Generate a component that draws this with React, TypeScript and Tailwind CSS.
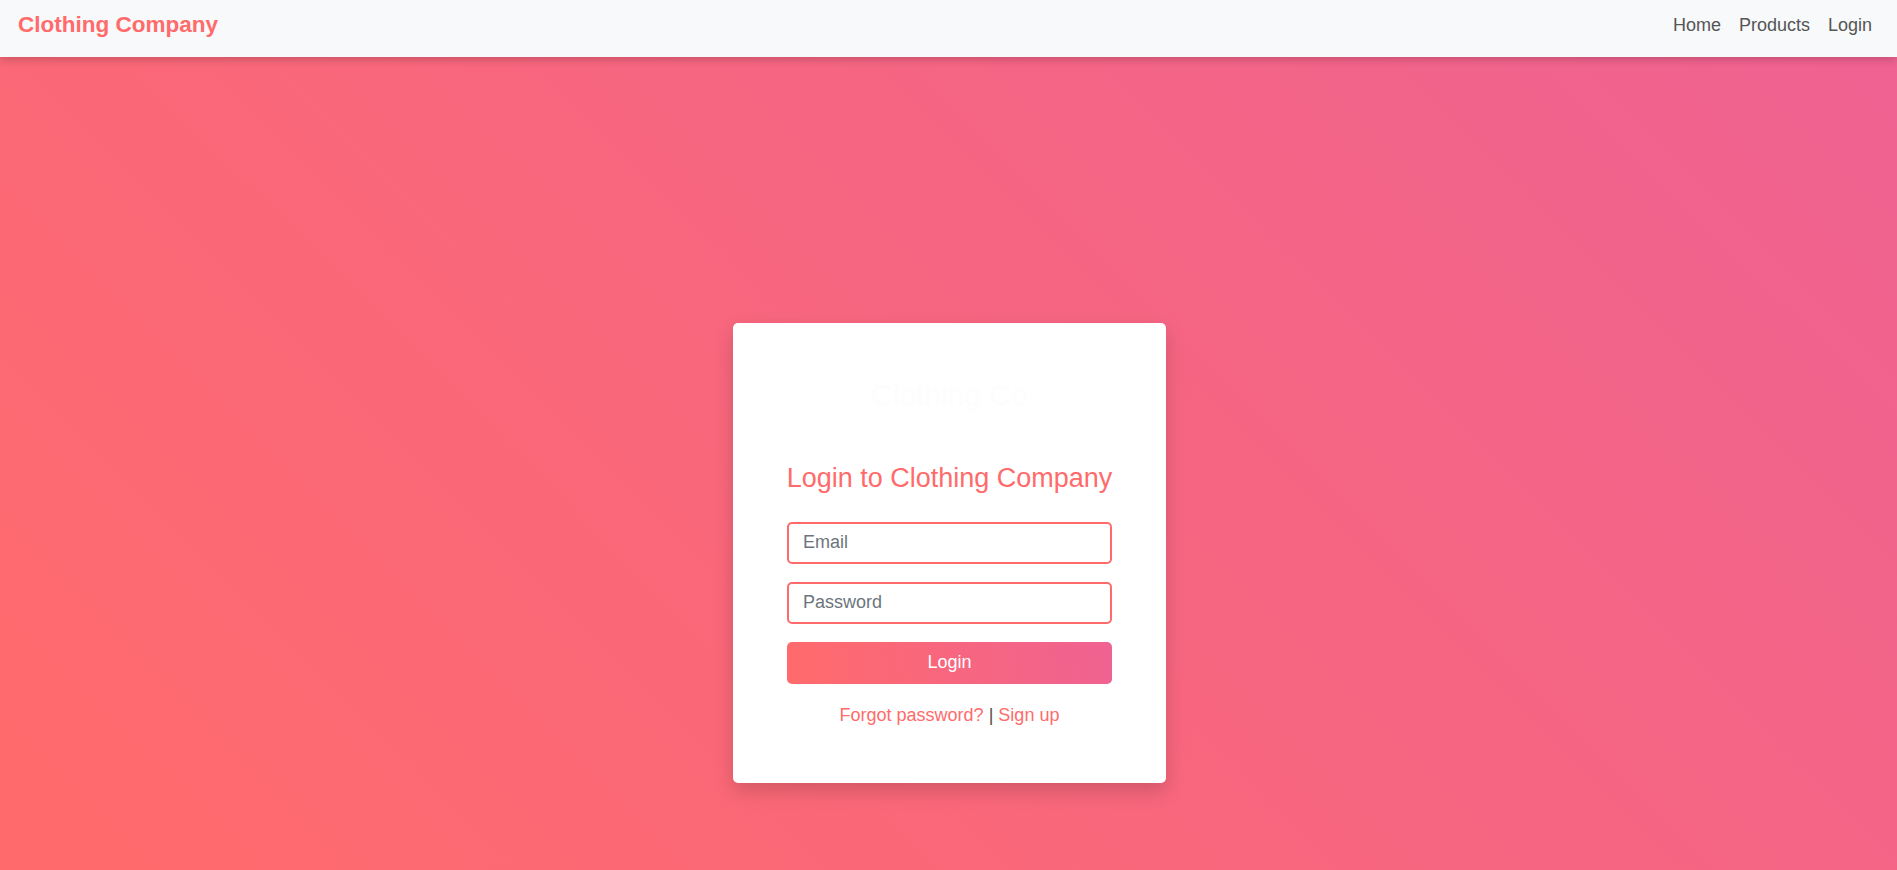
import React from "react";

const NavBar = () => {
  const links = ["Home", "Products", "Login"];
  return (
    <nav className="relative z-10 flex h-[57px] items-center justify-between bg-[#f8f9fa] pl-[18px] pr-[16px] pb-[7px] shadow-[0_3px_8px_rgba(0,0,0,0.18)]">
      <a href="#" className="text-[22.5px] font-bold leading-[1.5] text-[#ff6b6b]">
        Clothing Company
      </a>
      <ul className="flex items-center">
        {links.map((link) => (
          <li key={link}>
            <a href="#" className="block px-[9px] text-[18px] leading-[1.5] text-[#555]">
              {link}
            </a>
          </li>
        ))}
      </ul>
    </nav>
  );
};

const LoginCard = () => {
  return (
    <div className="w-[433px] rounded-[5px] bg-white p-[54px] shadow-[0_8px_20px_rgba(0,0,0,0.16)]">
      {/* Logo (white on white in the original) */}
      <div className="flex h-[84.5px] items-start justify-center">
        <span className="text-[30px] leading-[1.2] text-[#fdfdfd]">Clothing Co</span>
      </div>

      <h2 className="-mx-[10px] mb-[28px] whitespace-nowrap text-center text-[27px] font-normal leading-[1.2] text-[#ff6b6b]">
        Login to Clothing Company
      </h2>

      <form onSubmit={(e) => e.preventDefault()}>
        <input
          type="email"
          placeholder="Email"
          className="mb-[18px] block h-[42px] w-full rounded-[5px] border-2 border-[#ff6b6b] bg-white px-[14px] text-[18px] text-[#495057] outline-none placeholder:text-[#6c757d]"
        />
        <input
          type="password"
          placeholder="Password"
          className="mb-[18px] block h-[42px] w-full rounded-[5px] border-2 border-[#ff6b6b] bg-white px-[14px] text-[18px] text-[#495057] outline-none placeholder:text-[#6c757d]"
        />
        <button
          type="submit"
          className="block h-[42px] w-full rounded-[5px] bg-[linear-gradient(80deg,#ff6b6b,#f06292)] text-[18px] font-medium text-white"
        >
          Login
        </button>
      </form>

      <p className="mt-[18px] text-center text-[18px] leading-[1.5] text-[#5a4a3a]">
        <a href="#" className="text-[#ff6b6b]">
          Forgot password?
        </a>{" "}
        |{" "}
        <a href="#" className="text-[#ff6b6b]">
          Sign up
        </a>
      </p>
    </div>
  );
}

export default function App() {
  return (
    <div className="flex min-h-screen flex-col font-['Liberation_Sans',Arial,sans-serif]">
      <NavBar />
      <main className="flex flex-1 items-start justify-center bg-[linear-gradient(45deg,#ff6b6b,#f06292)] pt-[266px] pb-[40px] pl-[2px]">
        <LoginCard />
      </main>
    </div>
  );
}
